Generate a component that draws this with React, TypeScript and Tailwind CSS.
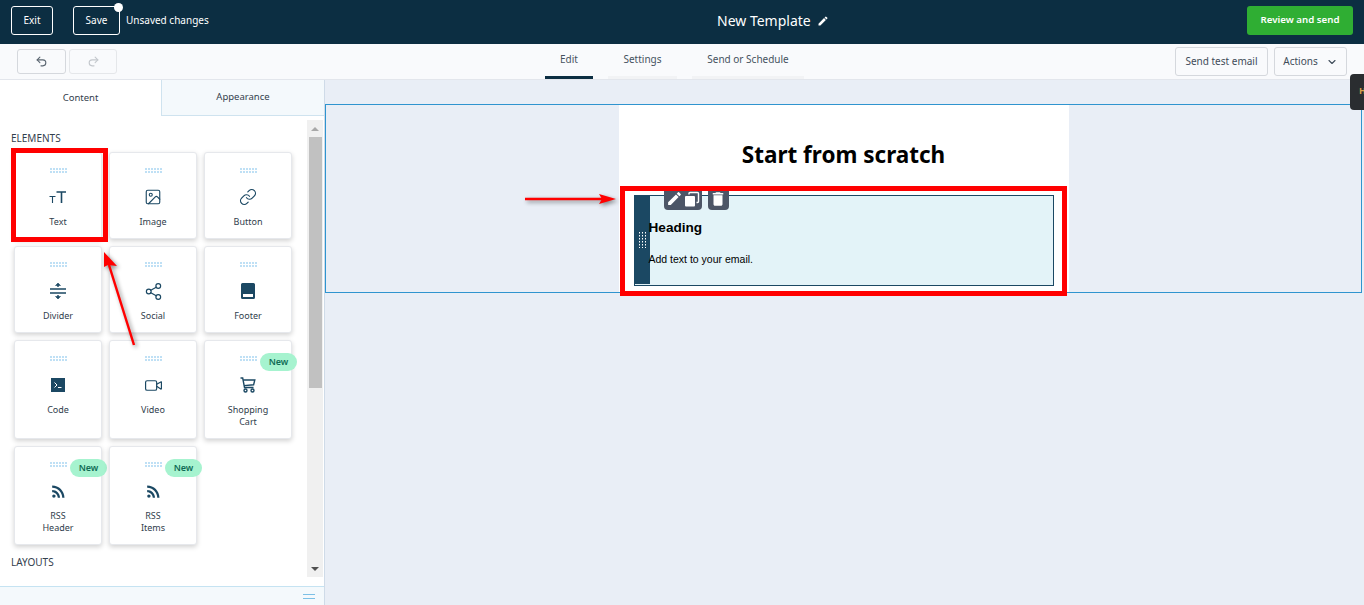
import React from "react";
import { Undo2, Redo2, ChevronDown, Image, Link, Share2, Video } from "lucide-react";
import { MdEdit, MdDelete, MdRssFeed } from "react-icons/md";

const ui = "font-['Noto_Sans','Open_Sans',sans-serif]";
const navy = "#1b4863";

function Grip({ color = "#bfe0f5", cols = 6, rows = 2, w = 2, h = 2, stepX = 3, stepY = 3 }: { color?: string; cols?: number; rows?: number; w?: number; h?: number; stepX?: number; stepY?: number }) {
  const items: React.ReactNode[] = [];
  for (let r = 0; r < rows; r++) for (let c = 0; c < cols; c++) items.push(<rect key={`${r}-${c}`} x={c * stepX} y={r * stepY} width={w} height={h} fill={color} />);
  return (
    <svg width={cols * stepX - stepX + w} height={rows * stepY - stepY + h} className="block">
      {items}
    </svg>
  );
}

const TextIcon = () => (
  <svg width="20" height="20" viewBox="0 0 20 20" fill="none" stroke={navy}>
    <path d="M8.5 5h9.5M13.5 5V16" strokeWidth="1.6" />
    <path d="M1.5 9.5h6M4.5 9.5V16" strokeWidth="1.1" />
  </svg>
);
const DividerIcon = () => (
  <svg width="18" height="18" viewBox="0 0 18 18" fill="none" stroke={navy} strokeWidth="1.4">
    <path d="M1 7h16M1 11h16" />
    <path d="M9 2v3M9 13v3" />
    <path d="M6.5 3.5L9 1l2.5 2.5zM6.5 14.5L9 17l2.5-2.5z" fill={navy} strokeWidth="0.6" />
  </svg>
);
const FooterIcon = () => (
  <svg width="16" height="18" viewBox="0 0 16 18">
    <path d="M2.5 1h11A1.5 1.5 0 0 1 15 2.5v13a1.5 1.5 0 0 1-1.5 1.5h-11A1.5 1.5 0 0 1 1 15.5v-13A1.5 1.5 0 0 1 2.5 1z" fill={navy} />
    <rect x="3" y="12" width="10" height="3" fill="#fff" />
  </svg>
);
const CodeIcon = () => (
  <svg width="14" height="14" viewBox="0 0 14 14">
    <rect width="14" height="14" fill={navy} />
    <path d="M3.5 4.5L6 7 3.5 9.5" stroke="#fff" fill="none" strokeWidth="1" />
    <path d="M7 9.5h3.5" stroke="#fff" strokeWidth="1" />
  </svg>
);
const CartIcon = () => (
  <svg width="16" height="16" viewBox="0 0 16 16" fill="none" stroke={navy} strokeWidth="1.4">
    <path d="M0.5 1h2.2l1.8 9.5h9" />
    <path d="M3.2 3h11.6l-1.2 4.8-9.5 .8" />
    <circle cx="5.5" cy="13.5" r="1.5" />
    <circle cx="12.5" cy="13.5" r="1.5" />
  </svg>
);
const CopyIcon = () => (
  <svg width="16" height="16" viewBox="0 0 16 16">
    <rect x="1" y="5" width="10" height="10.5" rx="1" fill="#fff" />
    <path d="M5 3.5V2.5a1 1 0 0 1 1-1h7.5a1 1 0 0 1 1 1v8a1 1 0 0 1-1 1h-1" fill="none" stroke="#fff" strokeWidth="1.4" />
  </svg>
);

const cards: { label: string[]; icon: React.ReactNode; tall?: boolean; isNew?: boolean }[] = [
  { label: ["Text"], icon: <TextIcon /> },
  { label: ["Image"], icon: <Image size={18} color={navy} strokeWidth={1.5} /> },
  { label: ["Button"], icon: <Link size={18} color={navy} strokeWidth={1.6} /> },
  { label: ["Divider"], icon: <DividerIcon /> },
  { label: ["Social"], icon: <Share2 size={19} color={navy} strokeWidth={1.5} /> },
  { label: ["Footer"], icon: <FooterIcon /> },
  { label: ["Code"], icon: <CodeIcon />, tall: true },
  { label: ["Video"], icon: <Video size={19} color={navy} strokeWidth={1.5} />, tall: true },
  { label: ["Shopping", "Cart"], icon: <CartIcon />, tall: true, isNew: true },
  { label: ["RSS", "Header"], icon: <MdRssFeed size={19} color={navy} />, tall: true, isNew: true },
  { label: ["RSS", "Items"], icon: <MdRssFeed size={19} color={navy} />, tall: true, isNew: true },
];

function Card({ label, icon, tall, isNew }: (typeof cards)[number]) {
  return (
    <div className={`relative flex flex-col items-center rounded-[3px] border border-[#e6e8ec] bg-white pt-[15px] shadow-[0_2px_5px_rgba(0,0,0,0.18)] ${tall ? "h-[99px]" : "h-[87px]"}`}>
      <Grip />
      <div className="mt-[12px] flex h-[24px] w-[24px] items-center justify-center">{icon}</div>
      <div className="mt-[7px] text-center text-[9px] leading-[12px] text-[#2f3d4c]">
        {label.map((l) => (
          <div key={l}>{l}</div>
        ))}
      </div>
      {isNew && (
        <span className="absolute left-[55px] top-[12px] flex h-[18px] w-[37px] items-center justify-center rounded-full bg-[#a6f3cf] text-[9px] font-semibold text-[#0f6b55]">New</span>
      )}
    </div>
  );
}

export default function App() {
  return (
    <div className={`${ui} relative flex h-[605px] w-[1364px] flex-col overflow-hidden bg-[#e9eef6]`}>
      {/* header */}
      <header className="grid h-[44px] shrink-0 grid-cols-[706px_auto_1fr] items-center bg-[#0c2e42] pb-[3px] pl-[11px] pr-[11px] text-white">
        <div className="flex items-center">
          <button className="flex h-[29px] w-[42px] items-center justify-center rounded-[3px] border border-white text-[10px]">Exit</button>
          <button className="relative ml-[20px] flex h-[29px] w-[47px] items-center justify-center rounded-[3px] border border-white text-[10px]">
            Save
            <span className="absolute right-[-4px] top-[-4px] h-[9px] w-[9px] rounded-full bg-white" />
          </button>
          <span className="ml-[6px] text-[10px]">Unsaved changes</span>
        </div>
        <div className="flex items-center text-[14px]">
          New Template
          <MdEdit size={12} className="ml-[6px]" />
        </div>
        <div className="flex justify-end">
          <button className="h-[29px] w-[106px] rounded-[3px] bg-[#2fae33] text-[9.7px] font-semibold">Review and send</button>
        </div>
      </header>

      {/* toolbar */}
      <div className="grid h-[36px] shrink-0 grid-cols-[528px_auto_1fr] items-stretch border-b border-[#e3e6ec] bg-[#f9fafc] pl-[17px] pr-[17px]">
        <div className="flex items-center gap-[3px] pb-[1px]">
          <button className="flex h-[25px] w-[49px] items-center justify-center rounded-[3px] border border-[#d5d8dd]">
            <Undo2 size={13} color="#5a6570" />
          </button>
          <button className="flex h-[25px] w-[48px] items-center justify-center rounded-[3px] border border-[#e5e7ea]">
            <Redo2 size={13} color="#c3c7cc" />
          </button>
        </div>
        <div className="flex items-stretch text-[10px] text-[#45525e]">
          <div className="flex w-[48px] items-center justify-center border-b-[3px] border-[#0c2e42] pb-[1px]">Edit</div>
          <div className="ml-[15px] flex w-[69px] items-center justify-center border-b-[3px] border-[#f2f3f5] pb-[1px]">Settings</div>
          <div className="ml-[15px] flex w-[112px] items-center justify-center border-b-[3px] border-[#f2f3f5] pb-[1px]">Send or Schedule</div>
        </div>
        <div className="flex items-center justify-end gap-[6px]">
          <button className="h-[29px] w-[93px] rounded-[3px] border border-[#d5d8dd] text-[10px] text-[#3f4c59]">Send test email</button>
          <button className="flex h-[29px] w-[73px] items-center justify-center gap-[8px] rounded-[3px] border border-[#d5d8dd] text-[10px] text-[#3f4c59]">
            Actions
            <ChevronDown size={12} strokeWidth={2.2} />
          </button>
        </div>
      </div>

      <div className="flex min-h-0 flex-1">
        {/* sidebar */}
        <aside className="relative flex w-[325px] shrink-0 flex-col border-r border-[#cfdbe8] bg-white">
          <div className="flex h-[36px] shrink-0 text-[9.5px] text-[#33404d]">
            <div className="flex w-[161px] items-center justify-center pt-[1px]">Content</div>
            <div className="flex w-[163px] items-center justify-center border-b border-l border-[#cfe3ef] bg-[#f4f9fc]">Appearance</div>
          </div>
          <div className="flex min-h-0 flex-1">
            <div className="min-w-0 flex-1 pl-[11px] pt-[16px]">
              <div className="text-[10px] leading-[13px] text-[#33404d]">ELEMENTS</div>
              <div className="ml-[3px] mt-[7px] grid w-[278px] grid-cols-[88px_88px_88px] gap-[7px]">
                {cards.map((c) => (
                  <Card key={c.label.join(" ")} {...c} />
                ))}
              </div>
              <div className="mt-[11px] text-[10px] leading-[13px] text-[#33404d]">LAYOUTS</div>
            </div>
            <div className="mr-[1px] mt-[4px] flex h-[457px] w-[16px] flex-col items-center bg-[#f0f0f0]">
              <div className="flex h-[17px] w-full items-center justify-center">
                <div className="h-0 w-0 border-x-[4px] border-b-[4px] border-x-transparent border-b-[#a8a8a8]" />
              </div>
              <div className="h-[251px] w-[13px] bg-[#c1c1c1]" />
              <div className="mt-auto flex h-[17px] w-full items-center justify-center">
                <div className="h-0 w-0 border-x-[4px] border-t-[4px] border-x-transparent border-t-[#505050]" />
              </div>
            </div>
          </div>
          <div className="flex h-[19px] shrink-0 items-center justify-end border-t border-[#c5e3f2] bg-[#f4f9fc] pr-[9px]">
            <div className="h-[5px] w-[12px] border-y border-[#7cc0e6]" />
          </div>
        </aside>

        {/* canvas */}
        <main className="min-w-0 flex-1 pt-[24px] pr-[2px]">
          <section className="flex h-[189px] justify-center border border-[#2f94cf]">
            <div className="w-[450px] bg-white">
              <h1 className="pt-[32px] text-center text-[22.5px] font-bold leading-[36px] text-black">Start from scratch</h1>
              <div className="relative mx-[15px] mt-[22px] flex h-[91px] border border-[#1b4863] bg-[#e3f3f8]">
                <div className="flex h-[88px] w-[15px] shrink-0 items-center justify-center bg-[#1b4863]">
                  <Grip color="#ffffff" cols={3} rows={6} w={1} h={1.5} stepX={3} stepY={3} />
                </div>
                <div className="-ml-[1px] font-['Liberation_Sans',Arial,sans-serif] text-black">
                  <div className="mt-[23px] text-[13.6px] font-bold leading-[18px]">Heading</div>
                  <div className="mt-[15px] text-[10.5px] leading-[14px]">Add text to your email.</div>
                </div>
                <div className="absolute left-[29px] top-[-9px] flex h-[23px] w-[38px] items-center justify-center gap-[1px] rounded-b-[4px] bg-[#4c5566] text-white">
                  <MdEdit size={17} />
                  <CopyIcon />
                </div>
                <div className="absolute left-[73px] top-[-9px] flex h-[23px] w-[21px] items-center justify-center rounded-b-[4px] bg-[#4c5566] text-white">
                  <MdDelete size={18} />
                </div>
              </div>
            </div>
          </section>
        </main>
      </div>

      {/* floating tab */}
      <div className="absolute left-[1350px] top-[74px] h-[36px] w-[14px] overflow-hidden rounded-l-[4px] bg-[#2a2d30]">
        <span className="absolute left-[9px] top-[11px] text-[9px] font-bold leading-[12px] text-[#d9a04a]">H</span>
      </div>

      {/* annotations */}
      <div className="pointer-events-none absolute left-[11px] top-[148px] h-[94px] w-[97px] border-[5px] border-[#ff0000]" />
      <div className="pointer-events-none absolute left-[620px] top-[186px] h-[110px] w-[447px] border-[5px] border-[#ff0000]" />
      <svg className="pointer-events-none absolute left-[95px] top-[245px] drop-shadow-[2px_2px_2px_rgba(0,0,0,0.45)]" width="50" height="110" viewBox="0 0 50 110">
        <path d="M39 100L14 20" stroke="#ff0000" strokeWidth="2.5" fill="none" />
        <path d="M9 7L22 21 13 20 9 22z" fill="#ff0000" />
      </svg>
      <svg className="pointer-events-none absolute left-[520px] top-[190px] drop-shadow-[2px_2px_2px_rgba(0,0,0,0.45)]" width="100" height="20" viewBox="0 0 100 20">
        <path d="M5 9H85" stroke="#ff0000" strokeWidth="2.5" fill="none" />
        <path d="M79 4L96 9 79 14 82 9z" fill="#ff0000" />
      </svg>
    </div>
  );
}
